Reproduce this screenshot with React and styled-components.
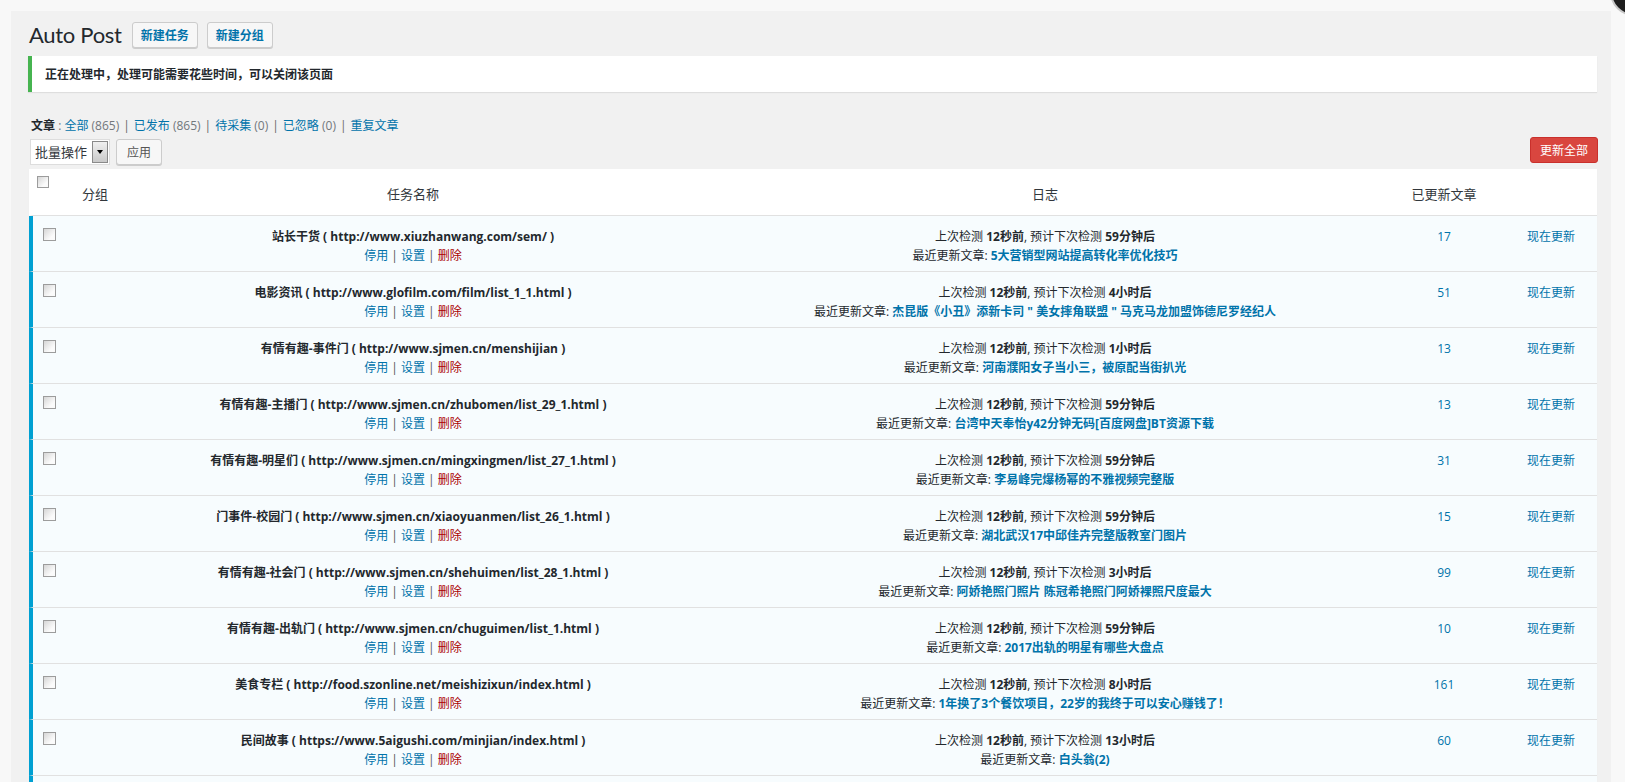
import styled, { createGlobalStyle } from "styled-components";

const GlobalStyle = createGlobalStyle`
    html, body {
        margin: 0;
        padding: 0;
        background: #f8f8f8;
    }
    body {
        font-family: "Open Sans", "Noto Sans CJK SC", sans-serif;
        color: #23282d;
        font-size: 12px;
    }
`;

const COLUMNS = "33px 53px 588px 676px 122px 1fr";

const tasks = [
    { name: "站长干货", url: "http://www.xiuzhanwang.com/sem/", next: "59分钟后", post: "5大营销型网站提高转化率优化技巧", count: 17 },
    { name: "电影资讯", url: "http://www.glofilm.com/film/list_1_1.html", next: "4小时后", post: "杰昆版《小丑》添新卡司 \" 美女摔角联盟 \" 马克马龙加盟饰德尼罗经纪人", count: 51 },
    { name: "有情有趣-事件门", url: "http://www.sjmen.cn/menshijian", next: "1小时后", post: "河南濮阳女子当小三，被原配当街扒光", count: 13 },
    { name: "有情有趣-主播门", url: "http://www.sjmen.cn/zhubomen/list_29_1.html", next: "59分钟后", post: "台湾中天奉怡y42分钟无码[百度网盘]BT资源下载", count: 13 },
    { name: "有情有趣-明星们", url: "http://www.sjmen.cn/mingxingmen/list_27_1.html", next: "59分钟后", post: "李易峰完爆杨幂的不雅视频完整版", count: 31 },
    { name: "门事件-校园门", url: "http://www.sjmen.cn/xiaoyuanmen/list_26_1.html", next: "59分钟后", post: "湖北武汉17中邱佳卉完整版教室门图片", count: 15 },
    { name: "有情有趣-社会门", url: "http://www.sjmen.cn/shehuimen/list_28_1.html", next: "3小时后", post: "阿娇艳照门照片 陈冠希艳照门阿娇裸照尺度最大", count: 99 },
    { name: "有情有趣-出轨门", url: "http://www.sjmen.cn/chuguimen/list_1.html", next: "59分钟后", post: "2017出轨的明星有哪些大盘点", count: 10 },
    { name: "美食专栏", url: "http://food.szonline.net/meishizixun/index.html", next: "8小时后", post: "1年换了3个餐饮项目，22岁的我终于可以安心赚钱了！", count: 161 },
    { name: "民间故事", url: "https://www.5aigushi.com/minjian/index.html", next: "13小时后", post: "白头翁(2)", count: 60 },
];

const Page = styled.div`
    position: relative;
    height: 782px;
    overflow: hidden;
    padding: 11px 14px 0 11px;
    box-sizing: border-box;
`;

const Avatar = styled.div`
    position: absolute;
    left: 1610px;
    top: -32px;
    width: 44px;
    height: 44px;
    border-radius: 50%;
    background: #1d1d1d;
    border: 2px solid #c8c8c8;
`;

const Panel = styled.div`
    background: #f1f1f1;
    height: 100%;
    padding: 11px 14px 0 18px;
    box-sizing: border-box;
`;

const TitleBar = styled.div`
    display: flex;
    align-items: center;
    height: 26px;
`;

const Title = styled.h1`
    margin: 0 10px 0 0;
    font-family: Lato, "Open Sans", sans-serif;
    font-size: 22px;
    letter-spacing: -0.3px;
    font-weight: 400;
    line-height: 26px;
    color: #23282d;
`;

const AddButton = styled.button`
    height: 26px;
    padding: 0 8px;
    margin-right: 9px;
    border: 1px solid #ccc;
    border-radius: 3px;
    background: #f7f7f7;
    box-shadow: 0 1px 0 #ccc;
    color: #0073aa;
    font-family: inherit;
    font-size: 12px;
    font-weight: 700;
    cursor: pointer;
`;

const Notice = styled.div`
    margin: 8px 0 0 -1px;
    height: 36px;
    display: flex;
    align-items: center;
    background: #fff;
    border-left: 4px solid #46b450;
    box-shadow: 0 1px 1px rgba(0, 0, 0, 0.08);
    padding-left: 13px;
    font-size: 12px;
    font-weight: 700;
    color: #23282d;
`;

const SubSub = styled.div`
    margin-top: 25px;
    height: 18px;
    line-height: 18px;
    padding-left: 2px;
    font-size: 12px;
    color: #72777c;
    white-space: nowrap;
`;

const SubLabel = styled.b`
    color: #23282d;
`;

const SubLink = styled.a`
    color: #0073aa;
    text-decoration: none;
`;

const SubSep = styled.span`
    color: #666;
    margin: 0 4px;
`;

const ActionBar = styled.div`
    display: flex;
    justify-content: space-between;
    margin-top: 2px;
    height: 28px;
`;

const BulkGroup = styled.div`
    display: flex;
    align-self: flex-end;
    gap: 6px;
    margin-left: 1px;
`;

const FakeSelect = styled.div`
    display: flex;
    align-items: stretch;
    width: 80px;
    height: 26px;
    background: #fff;
    border: 1px solid #ddd;
    box-sizing: border-box;
`;

const SelectText = styled.span`
    flex: 1;
    padding-left: 4px;
    font-size: 13px;
    line-height: 24px;
    color: #32373c;
    white-space: nowrap;
    overflow: hidden;
`;

const SelectArrow = styled.span`
    flex: none;
    width: 14px;
    margin: 1px;
    border: 1px solid #8a8a8a;
    background: linear-gradient(#f0f0f0, #c9c9c9);
    display: flex;
    align-items: center;
    justify-content: center;
    &::after {
        content: "";
        border-left: 3px solid transparent;
        border-right: 3px solid transparent;
        border-top: 4px solid #000;
    }
`;

const ApplyButton = styled.button`
    height: 26px;
    padding: 0 10px;
    border: 1px solid #ccc;
    border-radius: 3px;
    background: #f7f7f7;
    box-shadow: 0 1px 0 #ccc;
    color: #555;
    font-family: inherit;
    font-size: 12px;
`;

const DangerButton = styled.button`
    align-self: flex-start;
    height: 26px;
    margin-right: -1px;
    padding: 0 9px;
    border: 1px solid #c9302c;
    border-radius: 3px;
    background: #d9463f;
    color: #fff;
    font-family: inherit;
    font-size: 12px;
`;

const Table = styled.div`
    margin-top: 4px;
    background: #fff;
    box-shadow: 0 1px 1px rgba(0, 0, 0, 0.04);
`;

const HeadRow = styled.div`
    display: grid;
    grid-template-columns: ${COLUMNS};
    height: 47px;
    box-sizing: border-box;
    border-left: 4px solid #fff;
    border-bottom: 1px solid #e1e1e1;
    font-size: 13px;
    color: #32373c;
`;

const HeadCell = styled.div`
    padding-top: 16px;
    line-height: 19px;
    text-align: ${props => props.$align || "center"};
    padding-left: ${props => props.$indent || 0}px;
`;

const Row = styled.div`
    display: grid;
    grid-template-columns: ${COLUMNS};
    align-items: start;
    height: 56px;
    box-sizing: border-box;
    padding-top: 11px;
    background: #f7fcfe;
    border-left: 4px solid #00a0d2;
    border-bottom: 1px solid #e1e1e1;
    line-height: 19px;
`;

const Cell = styled.div`
    text-align: center;
`;

const Check = styled.span`
    display: block;
    width: ${props => props.$size}px;
    height: ${props => props.$size}px;
    margin: ${props => props.$top}px 0 0 ${props => props.$left}px;
    box-sizing: border-box;
    border: 1px solid #9c9c9c;
    background: linear-gradient(135deg, #d6d6d6, #fbfbfb 70%);
`;

const TaskName = styled.div`
    font-weight: 700;
    color: #23282d;
`;

const RowActions = styled.div`
    color: #555;
`;

const RowLink = styled.a`
    color: ${props => (props.$danger ? "#a00" : "#0073aa")};
    text-decoration: none;
`;

const Strong = styled.b`
    font-weight: 700;
`;

const PostLink = styled.a`
    color: #0073aa;
    font-weight: 700;
    text-decoration: none;
`;

const CountLink = styled.a`
    color: #0073aa;
    text-decoration: none;
`;

function TaskRow({ task }) {
    return (
        <Row>
            <Check $size={13} $top={1} $left={10} />
            <div />
            <Cell>
                <TaskName>{task.name} ( {task.url} )</TaskName>
                <RowActions>
                    <RowLink>停用</RowLink> | <RowLink>设置</RowLink> | <RowLink $danger>删除</RowLink>
                </RowActions>
            </Cell>
            <Cell>
                <div>
                    上次检测 <Strong>12秒前</Strong>, 预计下次检测 <Strong>{task.next}</Strong>
                </div>
                <div>
                    最近更新文章: <PostLink>{task.post}</PostLink>
                </div>
            </Cell>
            <Cell>
                <CountLink>{task.count}</CountLink>
            </Cell>
            <Cell>
                <CountLink>现在更新</CountLink>
            </Cell>
        </Row>
    );
}

export default function App() {
    return (
        <Page>
            <GlobalStyle />
            <Avatar />
            <Panel>
                <TitleBar>
                    <Title>Auto Post</Title>
                    <AddButton>新建任务</AddButton>
                    <AddButton>新建分组</AddButton>
                </TitleBar>
                <Notice>正在处理中，处理可能需要花些时间，可以关闭该页面</Notice>
                <SubSub>
                    <SubLabel>文章</SubLabel> : <SubLink>全部</SubLink> (865)
                    <SubSep>|</SubSep>
                    <SubLink>已发布</SubLink> (865)
                    <SubSep>|</SubSep>
                    <SubLink>待采集</SubLink> (0)
                    <SubSep>|</SubSep>
                    <SubLink>已忽略</SubLink> (0)
                    <SubSep>|</SubSep>
                    <SubLink>重复文章</SubLink>
                </SubSub>
                <ActionBar>
                    <BulkGroup>
                        <FakeSelect>
                            <SelectText>批量操作</SelectText>
                            <SelectArrow />
                        </FakeSelect>
                        <ApplyButton>应用</ApplyButton>
                    </BulkGroup>
                    <DangerButton>更新全部</DangerButton>
                </ActionBar>
                <Table>
                    <HeadRow>
                        <div>
                            <Check $size={12} $top={7} $left={4} />
                        </div>
                        <HeadCell $align="left" $indent={16}>分组</HeadCell>
                        <HeadCell>任务名称</HeadCell>
                        <HeadCell>日志</HeadCell>
                        <HeadCell>已更新文章</HeadCell>
                        <HeadCell />
                    </HeadRow>
                    {tasks.map((task) => (
                        <TaskRow key={task.name} task={task} />
                    ))}
                    <Row>
                        <Check $size={13} $top={1} $left={10} />
                    </Row>
                </Table>
            </Panel>
        </Page>
    );
}
